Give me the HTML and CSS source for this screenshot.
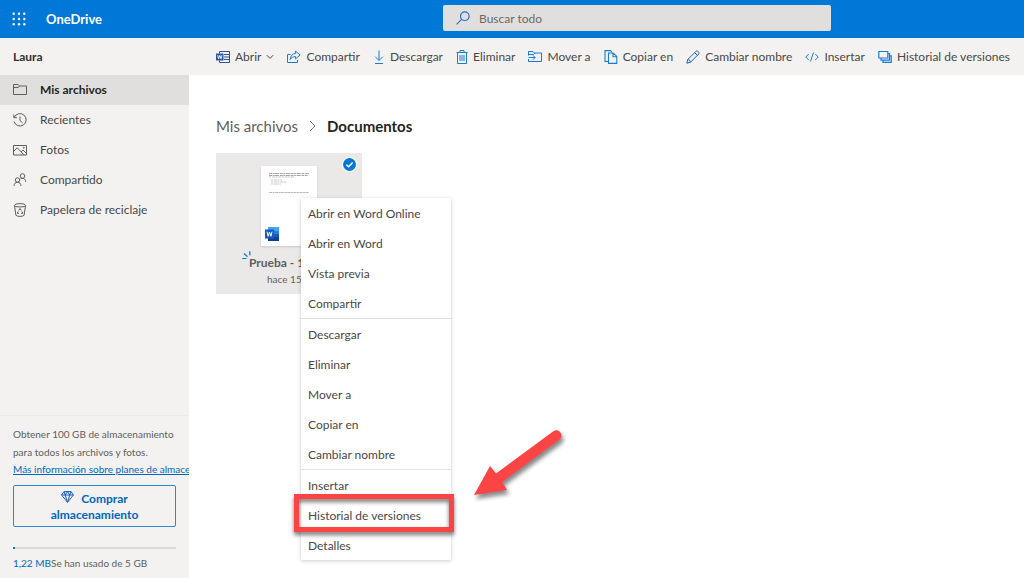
FILE: index.html
```html
<!DOCTYPE html>
<html lang="es">
<head>
<meta charset="utf-8">
<title>OneDrive</title>
<link rel="stylesheet" href="styles.css">
</head>
<body>
<header class="topbar">
  <div class="brand">
    <button class="launcher" type="button" aria-label="Aplicaciones">
      <svg width="14" height="14" viewBox="0 0 14 14" fill="#fff"><circle cx="1.7" cy="1.7" r="1.2"/><circle cx="7" cy="1.7" r="1.2"/><circle cx="12.3" cy="1.7" r="1.2"/><circle cx="1.7" cy="7" r="1.2"/><circle cx="7" cy="7" r="1.2"/><circle cx="12.3" cy="7" r="1.2"/><circle cx="1.7" cy="12.3" r="1.2"/><circle cx="7" cy="12.3" r="1.2"/><circle cx="12.3" cy="12.3" r="1.2"/></svg>
    </button>
    <a class="brand-name" href="#">OneDrive</a>
  </div>
  <label class="search">
    <svg width="14" height="14" viewBox="0 0 14 14" fill="none" stroke="#2b6fc4" stroke-width="1.2"><circle cx="8.8" cy="5.2" r="4.3"/><path d="M5.6 8.4L.6 13.4"/></svg>
    <input type="text" placeholder="Buscar todo" aria-label="Buscar todo">
  </label>
</header>

<div class="commandbar">
  <div class="owner">Laura</div>
  <div class="commands">
    <button class="command" type="button">
      <svg width="14" height="14" viewBox="0 0 14 14" fill="none" stroke="#2b579a"><path d="M3.5 3.5v-2h10v11h-10v-2M8 4.5h5.5M8 7h5.5M8 9.5h5.5"/><path d="M0 3.5h7.5v7H0z" fill="#2b579a" stroke="none"/><path d="M1.6 5.2l1 3.6 1.2-3.4 1.2 3.4 1-3.6" stroke="#fff" stroke-width=".9"/></svg>
      <span>Abrir</span>
      <svg class="chevron" width="8" height="8" viewBox="0 0 8 8" fill="none" stroke="#444"><path d="M.8 2.2L4 5.4l3.2-3.2"/></svg>
    </button>
    <button class="command" type="button">
      <svg width="14" height="14" viewBox="0 0 14 14" fill="none" stroke="#1a7bd4"><path d="M3.500 4.500h-3v8h10V10"/><path d="M8.500 1.200l4.700 3.800-4.700 3.800V6.600C6 6.600 4.400 7.500 3.200 9.500 3.500 6 5.400 3.600 8.500 3.400z"/></svg>
      <span>Compartir</span>
    </button>
    <button class="command" type="button">
      <svg width="12" height="14" viewBox="0 0 12 14" fill="none" stroke="#1a7bd4"><path d="M6 .5v9.700M2.200 6.700L6 10.500l3.800-3.800M2 13.500h8"/></svg>
      <span>Descargar</span>
    </button>
    <button class="command" type="button">
      <svg width="12" height="14" viewBox="0 0 12 14" fill="none" stroke="#1a7bd4"><path d="M.5 2.500h11M4 2.500v-2h4v2M1.500 2.500v11h9V2.500M4 5v6M6 5v6M8 5v6"/></svg>
      <span>Eliminar</span>
    </button>
    <button class="command" type="button">
      <svg width="14" height="14" viewBox="0 0 14 14" fill="none" stroke="#1a7bd4"><path d="M.5 5.500v-4h4.500l1.500 1.500h7v8.500H.5V9M.5 4.500h5L7 3M.5 7.500H7M5 5.300l2.200 2.200L5 9.700"/></svg>
      <span>Mover a</span>
    </button>
    <button class="command" type="button">
      <svg width="14" height="14" viewBox="0 0 14 14" fill="none" stroke="#1a7bd4" stroke-width="1.100"><path d="M4 11.500H1V.6h5.500l1.500 1.500"/><path d="M4.500 3h4.700l3.600 3.400v7H4.500zM9 3v3.700h3.800"/></svg>
      <span>Copiar en</span>
    </button>
    <button class="command" type="button">
      <svg width="14" height="14" viewBox="0 0 14 14" fill="none" stroke="#1a5fc0"><path d="M.8 13.200l1-3.700L10 1.300c1.300-1.200 3.800 1 2.700 2.700L4.500 12.200zM1.800 9.500c1.500.2 2.500 1.200 2.700 2.700M8.700 2.600l2.700 2.700"/></svg>
      <span>Cambiar nombre</span>
    </button>
    <button class="command" type="button">
      <svg width="14" height="14" viewBox="0 0 14 14" fill="none" stroke="#1a7bd4"><path d="M3.700 4L.8 7l2.900 3M10.300 4l2.900 3-2.900 3M8.500 2.500l-3 9"/></svg>
      <span>Insertar</span>
    </button>
    <button class="command" type="button">
      <svg width="14" height="14" viewBox="0 0 14 14" fill="none" stroke="#1a7bd4" stroke-width="1.200"><path d="M.8 1.500h9v6.500h-9zM9.800 3.700h1.700v6.500H3V8M11.500 5.900h1.700v6.500H5v-2.200"/></svg>
      <span>Historial de versiones</span>
    </button>
  </div>
</div>

<div class="workspace">
  <aside class="sidebar">
    <nav class="nav">
      <a class="nav-item current" href="#"><svg width="14" height="14" viewBox="0 0 14 14" fill="none" stroke="#605e5c"><path d="M.5 11.500V1.500h4.500l1.500 1.500h7v8.500zM.5 4.500h4.800L6.500 3"/></svg>Mis archivos</a>
      <a class="nav-item" href="#"><svg width="14" height="14" viewBox="0 0 14 14" fill="none" stroke="#605e5c"><path d="M1.200 4.500A6.200 6.200 0 1 1 1 8.500M.8 1.500v3.200H4M7 3.500v4l2.500 2.300"/></svg>Recientes</a>
      <a class="nav-item" href="#"><svg width="14" height="14" viewBox="0 0 14 14" fill="none" stroke="#605e5c"><path d="M.5 2.500h13v9.500H.5zM.5 8.500l3.700-3.700 6.800 7M8 9l2-2 3.500 3.500"/><circle cx="10.800" cy="4.800" r=".5"/></svg>Fotos</a>
      <a class="nav-item" href="#"><svg width="14" height="14" viewBox="0 0 14 14" fill="none" stroke="#605e5c"><circle cx="9.500" cy="3" r="2.300"/><circle cx="4.500" cy="7" r="2.200"/><path d="M1 13c0-2.400 1.500-3.800 3.500-3.800S8 10.600 8 13M7.500 6c2.500-1.500 5-.2 5.200 2.800"/></svg>Compartido</a>
      <a class="nav-item" href="#"><svg width="14" height="14" viewBox="0 0 14 14" fill="none" stroke="#605e5c"><ellipse cx="7" cy="2.300" rx="5.500" ry="1.700"/><path d="M1.500 2.300l1.400 10c1.600 1.500 6.600 1.500 8.200 0l1.400-10M5.700 7.500L7 5.500l1.300 2M9 8.500l.8 1.800H8M6 10.300H4.300L5.200 8.500"/></svg>Papelera de reciclaje</a>
    </nav>
    <section class="quota">
      <p class="quota-text">Obtener 100 GB de almacenamiento para todos los archivos y fotos.</p>
      <a class="quota-link" href="#">Más información sobre planes de almacenamiento</a>
      <button class="buy" type="button">
        <svg width="13" height="12" viewBox="0 0 13 12" fill="none" stroke="#1a5fc0"><path d="M3 .6h7l2.400 3.400-5.900 7.300L.6 4zM.6 4h11.800M3 .6L4.200 4l2.300 7.300L8.800 4 10 .6M4.200 4l2.300-3.400L8.800 4"/></svg>
        Comprar almacenamiento
      </button>
      <div class="meter"><div class="meter-fill"></div></div>
      <p class="usage"><a href="#">1,22 MB</a>Se han usado de 5 GB</p>
    </section>
  </aside>

  <main class="content">
    <nav class="crumbs">
      <a href="#">Mis archivos</a>
      <svg width="7" height="12" viewBox="0 0 7 12" fill="none" stroke="#777"><path d="M1 1l5 5-5 5"/></svg>
      <strong>Documentos</strong>
    </nav>
    <div class="tile">
      <svg class="check" width="15" height="15" viewBox="0 0 15 15"><circle cx="7.500" cy="7.500" r="7.500" fill="#fff"/><circle cx="7.500" cy="7.500" r="6.500" fill="#0078d4"/><path d="M4.400 7.600l2.200 2.200 4-4.200" fill="none" stroke="#fff" stroke-width="1.500"/></svg>
      <div class="page">
        <svg width="40" height="24" viewBox="0 0 40 24" fill="none" stroke="#a8a8a8"><path stroke-dasharray="3 .6 2 .5 4 .7" d="M0 1.500h40M0 3.500h39"/><path stroke-dasharray="2 .8 3 .6" d="M0 5h25M2 8h11M2 10h16M2 12h10" opacity=".65"/><path stroke-dasharray="3 .6 2 .5" d="M0 20.500h40" opacity=".8"/></svg>
        <svg class="word" width="14" height="14" viewBox="0 0 14 14"><path fill="#41a5ee" d="M3 0h11v4H3z"/><path fill="#2b7cd3" d="M3 4h11v3H3z"/><path fill="#185abd" d="M3 7h11v4H3z"/><path fill="#103f91" d="M3 10h11v4H3z"/><path fill="#185abd" d="M0 2.500h9v9H0z"/><path d="M2 4.700l1.100 4.600 1.400-4.200 1.400 4.200L7 4.700" fill="none" stroke="#fff"/></svg>
      </div>
      <div class="file-name">Prueba - 1
        <svg class="new" width="9" height="9" viewBox="0 0 9 9" stroke="#0078d4" stroke-width="1.200"><path d="M.3 7.500h4.200M2 2.500l3.500 3.300M7.800.3v4"/></svg>
      </div>
      <div class="file-date">hace 15</div>

      <div class="menu" role="menu">
        <button type="button" role="menuitem">Abrir en Word Online</button>
        <button type="button" role="menuitem">Abrir en Word</button>
        <button type="button" role="menuitem">Vista previa</button>
        <button type="button" role="menuitem">Compartir</button>
        <hr>
        <button type="button" role="menuitem">Descargar</button>
        <button type="button" role="menuitem">Eliminar</button>
        <button type="button" role="menuitem">Mover a</button>
        <button type="button" role="menuitem">Copiar en</button>
        <button type="button" role="menuitem">Cambiar nombre</button>
        <hr>
        <button type="button" role="menuitem">Insertar</button>
        <button class="marked" type="button" role="menuitem">Historial de versiones</button>
        <button type="button" role="menuitem">Detalles</button>
        <svg class="arrow" width="100" height="80" viewBox="0 0 100 80" fill="#fc4444"><path d="M3 70L19 41l6 7.500L82 6.500a5 5 0 0 1 6.500 8L31 57l5 8z"/></svg>
      </div>
    </div>
  </main>
</div>
</body>
</html>
```
FILE: styles.css
```css
* { box-sizing: border-box; }

body {
  margin: 0;
  min-height: 100vh;
  display: flex;
  flex-direction: column;
  overflow: hidden;
  background: #fff;
  color: #4a4846;
  font: 12px/16px Lato, "Noto Sans", sans-serif;
}

button, input { font: inherit; color: inherit; border: 0; background: none; padding: 0; }
a { color: inherit; text-decoration: none; }
p { margin: 0; }
svg { flex: none; }

.topbar {
  display: grid;
  grid-template-columns: 443px minmax(0, 388px) 1fr;
  align-items: center;
  height: 38px;
  background: #0078d7;
}
.brand { display: flex; align-items: center; gap: 20px; padding-left: 12px; }
.launcher { display: flex; }
.brand-name { color: #fff; font-size: 13px; font-weight: 700; }
.search {
  display: flex;
  align-items: center;
  gap: 9px;
  height: 26px;
  margin-top: -2px;
  padding: 0 13px;
  border-radius: 2px;
  background: #e1dfdd;
}
.search input { flex: 1; min-width: 0; padding-top: 2px; outline: 0; }
.search input::placeholder { color: #6b6967; opacity: 1; }

.commandbar { display: flex; align-items: center; height: 37px; background: #f3f2f1; }
.owner { width: 216px; flex: none; padding-left: 13px; color: #323130; font-weight: 700; }
.commands { flex: 1; display: flex; justify-content: space-between; padding-right: 14px; }
.command { display: flex; align-items: center; gap: 5px; white-space: nowrap; }

.workspace { flex: 1; display: flex; }
.sidebar {
  width: 189px;
  flex: none;
  display: flex;
  flex-direction: column;
  justify-content: space-between;
  overflow: hidden;
  background: #f3f2f1;
}
.nav-item { display: flex; align-items: center; gap: 13px; height: 30px; padding: 0 13px 1px; }
.nav-item.current { background: #e1dfdd; color: #252423; font-weight: 700; }

.quota {
  padding: 9px 13px 6px;
  border-top: 1px solid #edebe9;
  color: #605e5c;
  font-size: 10px;
  line-height: 18px;
}
.quota-link {
  display: block;
  line-height: 16px;
  white-space: nowrap;
  color: #0067c0;
  text-decoration: underline;
}
.buy {
  display: block;
  width: 100%;
  height: 42px;
  margin-top: 8px;
  padding: 2px 24px 0;
  border: 1px solid #2b88d8;
  border-radius: 2px;
  color: #0067c0;
  font-size: 12px;
  font-weight: 700;
  line-height: 16px;
}
.buy svg { margin-right: 4px; }
.meter { height: 2px; margin: 20px 0 5px; background: #dddbd9; }
.meter-fill { width: 2px; height: 2px; background: #0078d4; }
.usage a { color: #0067c0; }

.content { flex: 1; padding: 41px 27px; }
.crumbs { display: flex; align-items: center; gap: 11px; height: 20px; font-size: 15px; color: #605e5c; }
.crumbs strong { color: #252423; font-weight: 700; }

.tile {
  position: relative;
  width: 146px;
  height: 141px;
  margin-top: 17px;
  padding: 13px 0 0;
  background: #ebe9e8;
  color: #605e5c;
  white-space: nowrap;
}
.check { position: absolute; top: 4px; right: 5px; }
.page {
  display: flex;
  flex-direction: column;
  justify-content: space-between;
  width: 56px;
  height: 80px;
  margin: 0 45px;
  padding: 6px 5px 5px 8px;
  background: #fff;
  box-shadow: 0 1px 2px #0002;
}
.word { margin-left: -4px; }
.file-name { position: relative; margin-top: 9px; padding-left: 33px; font-weight: 700; }
.new { position: absolute; left: 26px; top: -4px; }
.file-date { padding-left: 51px; font-size: 10px; }

.menu {
  position: absolute;
  left: 85px;
  top: 45px;
  width: 150px;
  display: flex;
  flex-direction: column;
  background: #fff;
  color: #4a4846;
  box-shadow: 0 1px 4px #0003;
}
.menu button { position: relative; height: 30px; padding: 2px 7px 0; text-align: left; }
.menu hr { width: 100%; height: 1px; margin: 0; border: 0; background: #e3e1df; }
.marked::after {
  content: "";
  position: absolute;
  inset: -6px -3px -2px -7px;
  border: 5px solid #fc4444;
  filter: drop-shadow(0 3px 2px #0008);
}
.arrow { position: absolute; left: 170px; top: 227px; filter: drop-shadow(2px 4px 2px #0007); }
```
